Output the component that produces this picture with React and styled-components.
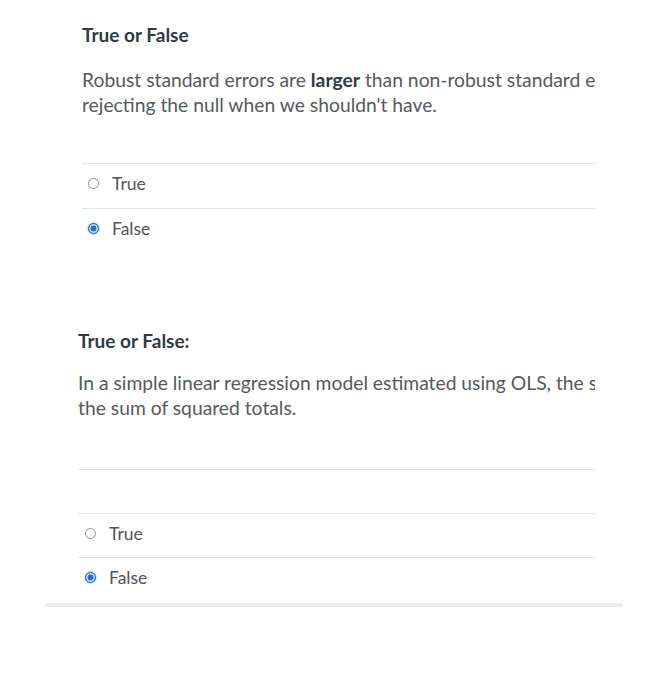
import React from "react";
import styled, { createGlobalStyle } from "styled-components";

const Global = createGlobalStyle`
  body {
    margin: 0;
    background: #ffffff;
    font-family: Lato, "Liberation Sans", sans-serif;
  }
`;

const Page = styled.div`
  width: 645px;
  height: 684px;
  overflow: hidden;
  padding-top: 23px;
  box-sizing: border-box;
`;

const Question = styled.div`
  margin-left: ${(p) => p.left}px;
  width: ${(p) => 595 - p.left}px;
  margin-top: ${(p) => p.top || 0}px;
`;

const Title = styled.div`
  font-size: 19px;
  font-weight: 700;
  color: #2d3b45;
  line-height: 24px;
`;

const Body = styled.div`
  margin-top: ${(p) => p.gap}px;
  font-size: 19.3px;
  line-height: 25px;
  color: #55595d;
  white-space: nowrap;
  overflow: hidden;
  b {
    color: #2d3b45;
  }
`;

const Answers = styled.div`
  margin-top: ${(p) => p.gap}px;
`;

const Row = styled.div`
  display: flex;
  align-items: center;
  gap: 13px;
  box-sizing: border-box;
  height: ${(p) => p.h}px;
  border-top: 1px solid #e2e4e5;
  padding: 0 0 5px ${(p) => p.pad}px;
  font-size: 17.5px;
  color: #4f5458;
`;

const Radio = styled.span`
  width: 11px;
  height: 11px;
  border-radius: 50%;
  box-sizing: border-box;
  border: 1.5px solid ${(p) => (p.on ? "#1f6fd6" : "#8c9094")};
  background: ${(p) => (p.on ? "#1f6fd6" : "#fff")};
  box-shadow: ${(p) => (p.on ? "inset 0 0 0 1.5px #dbe8fb, 0 0 0 1px #c7dbf6" : "none")};
`;

const BottomBar = styled.div`
  margin: 2px 0 0 45px;
  width: 578px;
  height: 4px;
  background: linear-gradient(#f0f0f0, #e8e8e8);
`;

function Option({ label, on, pad, h }) {
  return (
    <Row pad={pad} h={h}>
      <Radio on={on} />
      <span>{label}</span>
    </Row>
  );
}

export default function App() {
  return (
    <Page>
      <Global />
      <Question left={82}>
        <Title>True or False</Title>
        <Body gap={20}>
          Robust standard errors are <b>larger</b> than non-robust standard errors, making us less likely of
          <br />
          rejecting the null when we shouldn't have.
        </Body>
        <Answers gap={46}>
          <Option label="True" pad={6} h={45} />
          <Option label="False" on pad={6} h={45} />
        </Answers>
      </Question>
      <Question left={78} top={76}>
        <Title>True or False:</Title>
        <Body gap={17}>
          In a simple linear regression model estimated using OLS, the sum of squared residuals is always less than
          <br />
          the sum of squared totals.
        </Body>
        <Answers gap={49}>
          <Row pad={7} h={44} />
          <Option label="True" pad={7} h={44} />
          <Option label="False" on pad={7} h={44} />
        </Answers>
      </Question>
      <BottomBar />
    </Page>
  );
}
